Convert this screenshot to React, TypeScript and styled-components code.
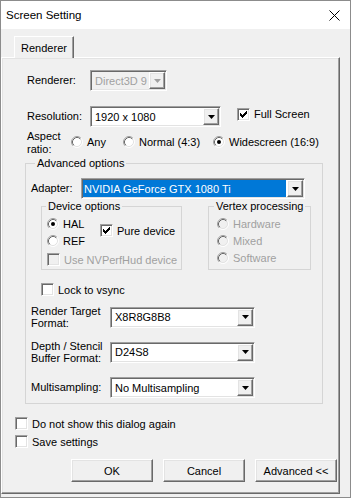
import React from "react";
import styled, { createGlobalStyle, css } from "styled-components";

const GlobalStyle = createGlobalStyle`
  html, body {
    margin: 0;
    padding: 0;
    background: #f0f0f0;
  }
  body {
    font-family: "Liberation Sans", Arial, sans-serif;
    font-size: 11px;
    color: #000;
  }
  * {
    box-sizing: border-box;
  }
`;

// classic 3d edges
const raised = css`
  border: 1px solid;
  border-color: #fff #696969 #696969 #fff;
  box-shadow: inset -1px -1px #a0a0a0, inset 1px 1px #e3e3e3;
`;

const sunken = css`
  border: 1px solid;
  border-color: #a0a0a0 #fff #fff #a0a0a0;
  box-shadow: inset 1px 1px #696969, inset -1px -1px #e3e3e3;
`;

const Window = styled.div`
  width: 351px;
  height: 498px;
  border: 1px solid #8c8c8c;
  background: #f0f0f0;
  display: flex;
  flex-direction: column;
  overflow: hidden;
`;

const TitleBar = styled.div`
  height: 28px;
  flex: none;
  background: #fff;
  display: flex;
  align-items: center;
  justify-content: space-between;
  padding: 0 10px 0 5px;
`;

const Title = styled.span`
  font-size: 11.5px;
`;

const Body = styled.div`
  flex: 1;
  padding-top: 7px;
  display: flex;
  flex-direction: column;
`;

const TabStrip = styled.div`
  display: flex;
  padding-left: 13px;
`;

const Tab = styled.div`
  position: relative;
  z-index: 1;
  width: 60px;
  height: 22px;
  margin-bottom: -1px;
  padding-top: 1px;
  display: flex;
  align-items: center;
  justify-content: center;
  background: #f0f0f0;
  border-style: solid;
  border-width: 1px 1px 0 1px;
  border-color: #fff #696969 transparent #fff;
  box-shadow: inset -1px 0 #a0a0a0;
`;

const Panel = styled.div`
  ${raised};
  width: 339px;
  height: 437px;
  display: flex;
  flex-direction: column;
`;

const Row = styled.div<{ $mt?: number; $pl?: number }>`
  display: flex;
  align-items: center;
  margin-top: ${(p) => p.$mt ?? 0}px;
  padding-left: ${(p) => p.$pl ?? 0}px;
`;

const Label = styled.div<{ $w: number; $lh?: number }>`
  width: ${(p) => p.$w}px;
  flex: none;
  line-height: ${(p) => p.$lh ?? 13}px;
  white-space: nowrap;
`;

const Group = styled.div<{ $w: number; $pl: number; $pb: number; $mt?: number; $ml?: number }>`
  width: ${(p) => p.$w}px;
  margin: ${(p) => p.$mt ?? 0}px 0 0 ${(p) => p.$ml ?? 0}px;
  border: 1px solid #d5d5d5;
  padding: 0 2px ${(p) => p.$pb}px ${(p) => p.$pl}px;
  display: flex;
  flex-direction: column;
`;

const Legend = styled.div<{ $ml: number }>`
  align-self: flex-start;
  margin: -7px 0 0 ${(p) => p.$ml}px;
  padding: 0 2px;
  line-height: 13px;
  white-space: nowrap;
  background: #f0f0f0;
`;

const GroupPair = styled.div<{ $mt: number; $ml: number }>`
  display: flex;
  gap: 26px;
  margin: ${(p) => p.$mt}px 0 0 ${(p) => p.$ml}px;
`;

const DeviceBody = styled.div`
  display: flex;
  align-items: flex-start;
  margin-top: 4px;
`;

const RadioColumn = styled.div<{ $w?: number; $mt?: number }>`
  width: ${(p) => (p.$w ? `${p.$w}px` : "auto")};
  flex: none;
  display: flex;
  flex-direction: column;
  gap: 4px;
  margin-top: ${(p) => p.$mt ?? 0}px;
`;

const ComboBox = styled.div<{ $w: number; $disabled?: boolean }>`
  ${sunken};
  width: ${(p) => p.$w}px;
  height: 21px;
  flex: none;
  padding: 1px;
  display: flex;
  background: ${(p) => (p.$disabled ? "#f0f0f0" : "#fff")};
  color: ${(p) => (p.$disabled ? "#a0a0a0" : "#000")};
`;

const ComboText = styled.div<{ $selected?: boolean }>`
  flex: 1;
  min-width: 0;
  display: flex;
  align-items: center;
  white-space: nowrap;
  overflow: hidden;
  padding-left: ${(p) => (p.$selected ? 1 : 3)}px;
  margin-right: ${(p) => (p.$selected ? 1 : 0)}px;
  background: ${(p) => (p.$selected ? "#0078d7" : "transparent")};
  color: ${(p) => (p.$selected ? "#fff" : "inherit")};
`;

const DropButton = styled.div`
  ${raised};
  width: 16px;
  flex: none;
  display: flex;
  align-items: center;
  justify-content: center;
  background: #f0f0f0;
`;

const Item = styled.div<{ $mt?: number; $ml?: number; $mb?: number; $w?: number; $disabled?: boolean }>`
  display: flex;
  align-items: center;
  gap: 4px;
  height: 13px;
  flex: none;
  width: ${(p) => (p.$w ? `${p.$w}px` : "auto")};
  margin: ${(p) => p.$mt ?? 0}px 0 ${(p) => p.$mb ?? 0}px ${(p) => p.$ml ?? 0}px;
  white-space: nowrap;
  color: ${(p) => (p.$disabled ? "#a0a0a0" : "#000")};
`;

const Box = styled.span<{ $disabled?: boolean }>`
  ${sunken};
  width: 13px;
  height: 13px;
  flex: none;
  display: flex;
  align-items: center;
  justify-content: center;
  background: ${(p) => (p.$disabled ? "#f0f0f0" : "#fff")};
`;

const ButtonRow = styled.div`
  display: flex;
  justify-content: flex-end;
  gap: 10px;
  margin-top: 11px;
  padding-right: 2px;
`;

const Button = styled.div`
  ${raised};
  width: 82px;
  height: 23px;
  display: flex;
  align-items: center;
  justify-content: center;
  background: #f0f0f0;
`;

const CloseIcon = () => (
  <svg width="11" height="11" viewBox="0 0 11 11">
    <path d="M0.5 0.5L10.5 10.5M10.5 0.5L0.5 10.5" stroke="#000" strokeWidth="1" />
  </svg>
);

const Arrow = ({ color }: { color: string }) => (
  <svg width="7" height="4" viewBox="0 0 7 4">
    <path d="M0 0H7L3.5 4Z" fill={color} />
  </svg>
);

const CHECK_COLS = [2, 3, 4, 3, 2, 1, 0];

const CheckMark = ({ color }: { color: string }) => (
  <svg width="7" height="7" viewBox="0 0 7 7">
    {CHECK_COLS.map((y, x) => (
      <rect key={x} x={x} y={y} width="1" height="3" fill={color} />
    ))}
  </svg>
);

const RadioIcon = ({ checked, disabled }: { checked?: boolean; disabled?: boolean }) => (
  <svg width="12" height="12" viewBox="0 0 12 12">
    <circle cx="6" cy="6" r="5" fill={disabled ? "#f0f0f0" : "#fff"} />
    <path d="M2.11 9.89A5.5 5.5 0 0 0 9.89 2.11" fill="none" stroke="#fff" />
    <path d="M2.82 9.18A4.5 4.5 0 0 0 9.18 2.82" fill="none" stroke="#e3e3e3" />
    <path d="M2.11 9.89A5.5 5.5 0 0 1 9.89 2.11" fill="none" stroke="#a0a0a0" />
    <path d="M2.82 9.18A4.5 4.5 0 0 1 9.18 2.82" fill="none" stroke="#696969" />
    {checked && <circle cx="6" cy="6" r="2" fill={disabled ? "#a0a0a0" : "#000"} />}
  </svg>
);

interface ComboProps {
  w: number;
  value: string;
  disabled?: boolean;
  selected?: boolean;
}

const Combo = ({ w, value, disabled, selected }: ComboProps) => (
  <ComboBox $w={w} $disabled={disabled}>
    <ComboText $selected={selected}>{value}</ComboText>
    <DropButton>
      <Arrow color={disabled ? "#a0a0a0" : "#000"} />
    </DropButton>
  </ComboBox>
);

interface ItemProps {
  label: string;
  checked?: boolean;
  disabled?: boolean;
  mt?: number;
  ml?: number;
  mb?: number;
  w?: number;
}

const Check = ({ label, checked, disabled, mt, ml, mb }: ItemProps) => (
  <Item $mt={mt} $ml={ml} $mb={mb} $disabled={disabled}>
    <Box $disabled={disabled}>{checked && <CheckMark color={disabled ? "#a0a0a0" : "#000"} />}</Box>
    {label}
  </Item>
);

const Radio = ({ label, checked, disabled, mt, ml, mb, w }: ItemProps) => (
  <Item $mt={mt} $ml={ml} $mb={mb} $w={w} $disabled={disabled}>
    <RadioIcon checked={checked} disabled={disabled} />
    {label}
  </Item>
);

const App = () => {
  return (
    <>
      <GlobalStyle />
      <Window>
        <TitleBar>
          <Title>Screen Setting</Title>
          <CloseIcon />
        </TitleBar>
        <Body>
          <TabStrip>
            <Tab>Renderer</Tab>
          </TabStrip>
          <Panel>
            <Row $mt={12} $pl={25}>
              <Label $w={63}>Renderer:</Label>
              <Combo w={77} value="Direct3D 9" disabled />
            </Row>
            <Row $mt={15} $pl={25}>
              <Label $w={63}>Resolution:</Label>
              <Combo w={131} value="1920 x 1080" />
              <Check label="Full Screen" checked ml={16} mb={5} />
            </Row>
            <Row $mt={3} $pl={25}>
              <Label $w={44}>
                Aspect
                <br />
                ratio:
              </Label>
              <Radio label="Any" w={52} mb={3} />
              <Radio label="Normal (4:3)" w={90} mb={3} />
              <Radio label="Widescreen (16:9)" checked mb={3} />
            </Row>

            <Group $w={298} $pl={5} $pb={5} $mt={7} $ml={23}>
              <Legend $ml={4}>Advanced options</Legend>
              <Row $mt={8}>
                <Label $w={50}>Adapter:</Label>
                <Combo w={224} value="NVIDIA GeForce GTX 1080 Ti" selected />
              </Row>

              <GroupPair $mt={7} $ml={10}>
                <Group $w={141} $pl={5} $pb={3}>
                  <Legend $ml={-1}>Device options</Legend>
                  <DeviceBody>
                    <RadioColumn $w={53}>
                      <Radio label="HAL" checked />
                      <Radio label="REF" />
                    </RadioColumn>
                    <Check label="Pure device" checked mt={7} />
                  </DeviceBody>
                  <Check label="Use NVPerfHud device" disabled mt={6} />
                </Group>
                <Group $w={103} $pl={8} $pb={3}>
                  <Legend $ml={-3}>Vertex processing</Legend>
                  <RadioColumn $mt={4}>
                    <Radio label="Hardware" disabled />
                    <Radio label="Mixed" disabled />
                    <Radio label="Software" disabled />
                  </RadioColumn>
                </Group>
              </GroupPair>

              <Check label="Lock to vsync" mt={13} ml={10} />

              <Row $mt={9}>
                <Label $w={79} $lh={12}>
                  Render Target
                  <br />
                  Format:
                </Label>
                <Combo w={145} value="X8R8G8B8" />
              </Row>
              <Row $mt={11}>
                <Label $w={79} $lh={12}>
                  Depth / Stencil
                  <br />
                  Buffer Format:
                </Label>
                <Combo w={145} value="D24S8" />
              </Row>
              <Row $mt={13}>
                <Label $w={79}>Multisampling:</Label>
                <Combo w={145} value="No Multisampling" />
              </Row>
            </Group>

            <Check label="Do not show this dialog again" mt={13} ml={13} />
            <Check label="Save settings" mt={5} ml={13} />

            <ButtonRow>
              <Button>OK</Button>
              <Button>Cancel</Button>
              <Button>Advanced &lt;&lt;</Button>
            </ButtonRow>
          </Panel>
        </Body>
      </Window>
    </>
  );
};

export default App;
